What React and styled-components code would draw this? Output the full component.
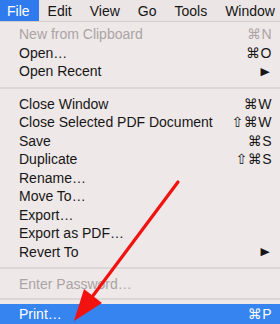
import React from "react";
import styled, { createGlobalStyle } from "styled-components";

const GlobalStyle = createGlobalStyle`
  html, body {
    margin: 0;
    padding: 0;
    background: #efe8e8;
  }
  body {
    font-family: "Liberation Sans", "DejaVu Sans", Arial, sans-serif;
  }
`;

const titles = ["File", "Edit", "View", "Go", "Tools", "Window"];

const items = [
  { label: "New from Clipboard", keys: "⌘N", disabled: true },
  { label: "Open…", keys: "⌘O" },
  { label: "Open Recent", submenu: true },
  { separator: true },
  { label: "Close Window", keys: "⌘W" },
  { label: "Close Selected PDF Document", keys: "⇧⌘W" },
  { label: "Save", keys: "⌘S" },
  { label: "Duplicate", keys: "⇧⌘S" },
  { label: "Rename…" },
  { label: "Move To…" },
  { label: "Export…" },
  { label: "Export as PDF…" },
  { label: "Revert To", submenu: true },
  { separator: true },
  { label: "Enter Password…", disabled: true },
  { separator: true, compact: true },
  { label: "Print…", keys: "⌘P", active: true },
];

const Screen = styled.div`
  position: relative;
  width: 280px;
  height: 324px;
  overflow: hidden;
  background: #efe8e8;
`;

const MenuBar = styled.div`
  display: flex;
  height: 21px;
  background: #ebe5e5;
  border-bottom: 1px solid #d3cdcd;
`;

const MenuTitle = styled.div`
  display: flex;
  align-items: center;
  padding: 0 9px;
  font-size: 14px;
  color: ${(p) => (p.$open ? "#ffffff" : "#161616")};
  background: ${(p) => (p.$open ? "#2f7bee" : "transparent")};
  white-space: nowrap;

  &:first-child {
    padding-left: 7px;
  }
`;

const Menu = styled.div`
  display: flex;
  flex-direction: column;
  padding-top: 3px;
`;

const Row = styled.div`
  display: flex;
  align-items: center;
  justify-content: space-between;
  height: 18.5px;
  padding: 0 8px 0 19px;
  font-size: 14px;
  color: ${(p) => (p.$active ? "#ffffff" : p.$disabled ? "#aaa4a4" : "#161616")};
  background: ${(p) => (p.$active ? "#3684ef" : "transparent")};
`;

const ActiveRow = styled(Row)`
  height: 20px;
  padding-bottom: 2px;
`;

const Keys = styled.span`
  font-family: "Liberation Sans", "DejaVu Sans", sans-serif;
  letter-spacing: 0.5px;
`;

const SubArrow = styled.span`
  font-family: "DejaVu Sans", sans-serif;
  font-size: 11px;
  margin-right: 3px;
  transform: scaleX(1.1);
`;

const Separator = styled.div`
  display: flex;
  align-items: center;
  height: ${(p) => (p.$compact ? "10px" : "14px")};

  &::after {
    content: "";
    flex: 1;
    height: 2px;
    background: #dcd6d6;
  }
`;

const Overlay = styled.svg`
  position: absolute;
  left: 0;
  top: 0;
  pointer-events: none;
`;

const MenuRow = ({ item }) => {
  const Comp = item.active ? ActiveRow : Row;
  return (
    <Comp $active={item.active} $disabled={item.disabled}>
      <span>{item.label}</span>
      {item.keys && <Keys>{item.keys}</Keys>}
      {item.submenu && <SubArrow>▶</SubArrow>}
    </Comp>
  );
};

const App = () => (
  <>
    <GlobalStyle />
    <Screen>
      <MenuBar>
        {titles.map((t, i) => (
          <MenuTitle key={t} $open={i === 0}>
            {t}
          </MenuTitle>
        ))}
      </MenuBar>
      <Menu>
        {items.map((item, i) =>
          item.separator ? (
            <Separator key={i} $compact={item.compact} />
          ) : (
            <MenuRow key={i} item={item} />
          )
        )}
      </Menu>
      <Overlay width="280" height="324" viewBox="0 0 280 324">
        <line x1="178" y1="182" x2="92" y2="297" stroke="#f2120f" strokeWidth="3.2" strokeLinecap="round" />
        <polygon points="74,321 84,289 102,303" fill="#f2120f" />
      </Overlay>
    </Screen>
  </>
);

export default App;
